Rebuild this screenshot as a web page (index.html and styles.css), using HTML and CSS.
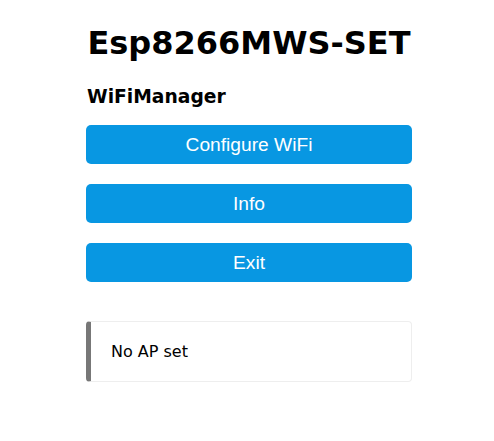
FILE: index.html
```html
<!DOCTYPE html>
<html lang="en">
<head>
<meta charset="utf-8">
<title>Esp8266MWS-SET</title>
<link rel="stylesheet" href="styles.css">
</head>
<body>
<div class="wrap">
  <h1 class="title">Esp8266MWS-SET</h1>
  <h3 class="subtitle">WiFiManager</h3>
  <div class="actions">
    <button class="btn" type="button">Configure WiFi</button>
    <button class="btn" type="button">Info</button>
    <button class="btn" type="button">Exit</button>
  </div>
  <div class="msg">No AP set</div>
</div>
</body>
</html>
```

FILE: styles.css
```css
html, body {
  margin: 0;
  padding: 0;
  background: #ffffff;
}
body {
  font-family: "DejaVu Sans", Verdana, sans-serif;
  color: #000;
  display: flex;
  justify-content: center;
  padding-left: 4px;
}
.wrap {
  width: 326px;
  display: flex;
  flex-direction: column;
}
.title {
  font-size: 32px;
  font-weight: bold;
  text-align: center;
  margin: 25px 0 0 0;
  line-height: 37px;
  white-space: nowrap;
}
.subtitle {
  font-size: 18.72px;
  font-weight: bold;
  margin: 24px 0 0 1px;
  line-height: 22px;
}
.actions {
  display: flex;
  flex-direction: column;
  gap: 20px;
  margin-top: 17px;
}
.btn {
  display: block;
  width: 100%;
  height: 39px;
  border: 0;
  border-radius: 5px;
  background: #0897e2;
  color: #fff;
  font-family: "Liberation Sans", Arial, sans-serif;
  font-size: 19.2px;
  line-height: 39px;
  padding: 0;
  text-align: center;
}
.msg {
  margin-top: 39px;
  padding: 20px;
  border: 1px solid #eee;
  border-left: 5px solid #777;
  border-radius: 4px;
  font-size: 16px;
  line-height: 19px;
}
```
